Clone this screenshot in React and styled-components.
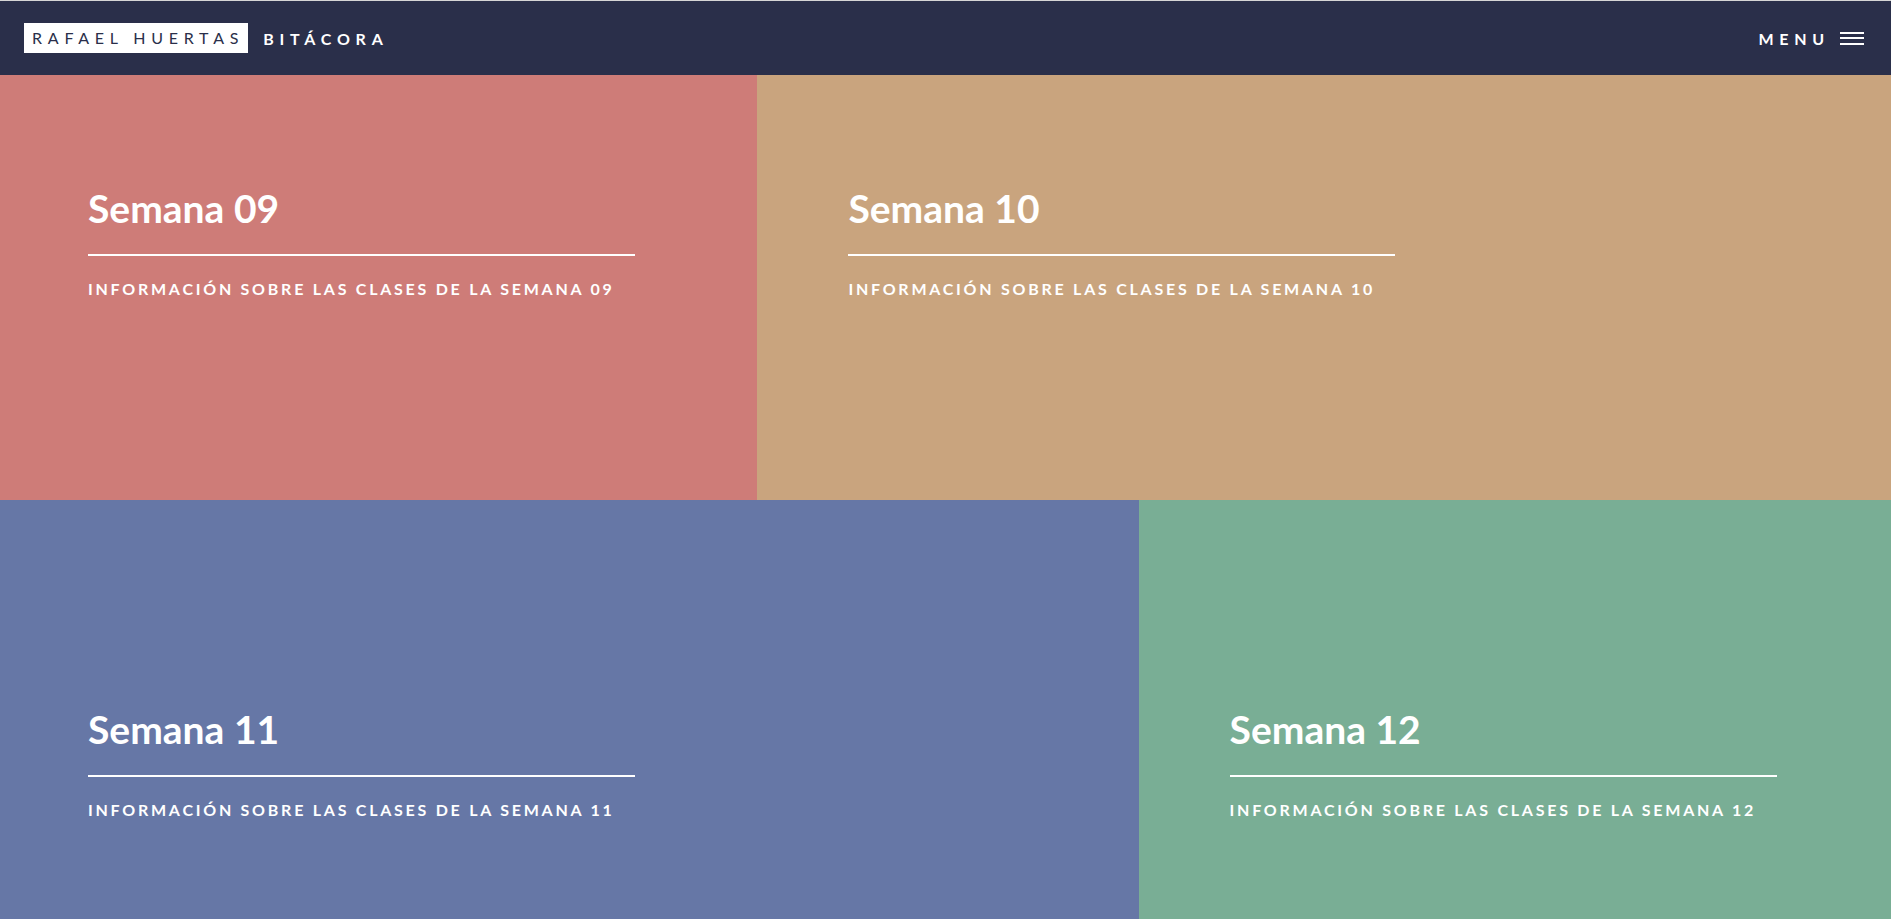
import React from 'react';
import styled, { createGlobalStyle } from 'styled-components';

const weeks = [
  { id: '09', bg: '#ce7c78', width: 'calc(40% + 1px)', row: 1, side: 'left' },
  { id: '10', bg: '#c9a47e', width: 'calc(60% - 1px)', row: 1, side: 'right' },
  { id: '11', bg: '#6677a6', width: 'calc(60% + 4px)', row: 2, side: 'left' },
  { id: '12', bg: '#79ae95', width: 'calc(40% - 4px)', row: 2, side: 'right' },
];

function App() {
  return (
    <>
      <GlobalStyle />
      <S.Header>
        <S.Brand>
          <S.Logo>Rafael Huertas</S.Logo>
          <S.Site>Bitácora</S.Site>
        </S.Brand>
        <S.Menu>
          Menu
          <svg width='24' height='13' viewBox='0 0 24 13'>
            <rect x='0' y='0' width='24' height='2' fill='#fff' />
            <rect x='0' y='5' width='24' height='2' fill='#fff' />
            <rect x='0' y='11' width='24' height='2' fill='#fff' />
          </svg>
        </S.Menu>
      </S.Header>
      <S.Tiles>
        {weeks.map((w) => (
          <S.Tile key={w.id} $bg={w.bg} $width={w.width} $row={w.row} $side={w.side}>
            <S.Title>Semana {w.id}</S.Title>
            <S.Rule />
            <S.Subtitle>Información sobre las clases de la semana {w.id}</S.Subtitle>
          </S.Tile>
        ))}
      </S.Tiles>
    </>
  );
}

export default App;

// -------------------------------------------------- styling ----------------------------------------------
const GlobalStyle = createGlobalStyle`
  * { box-sizing: border-box; }
  body {
    margin: 0;
    background: #2a2f4a;
    font-family: Lato, 'Liberation Sans', sans-serif;
    color: #fff;
  }
`;

const S = {};

S.Header = styled.header`
  height: 75px;
  border-top: 1px solid #d6d6d6;
  background-color: #2a2f4a;
  display: flex;
  align-items: center;
  justify-content: space-between;
  padding: 0 27px 0 24px;
`;

S.Brand = styled.div`
  display: flex;
  align-items: center;
  gap: 15px;
  font-size: 16px;
  letter-spacing: 0.36em;
  text-transform: uppercase;
`;

S.Logo = styled.span`
  background-color: #fff;
  color: #2a2f4a;
  height: 30px;
  line-height: 30px;
  padding: 0 4px 0 8px;
  font-weight: 400;
`;

S.Site = styled.span`
  font-weight: 700;
  color: #fff;
`;

S.Menu = styled.div`
  display: flex;
  align-items: center;
  gap: 10px;
  font-size: 16px;
  font-weight: 700;
  letter-spacing: 0.36em;
  text-transform: uppercase;

  svg {
    display: block;
  }
`;

S.Tiles = styled.main`
  display: flex;
  flex-wrap: wrap;
`;

S.Tile = styled.article`
  width: ${({ $width }) => $width};
  height: ${({ $row }) => ($row === 1 ? '425px' : '419px')};
  background-color: ${({ $bg }) => $bg};
  padding-top: ${({ $row }) => ($row === 1 ? '109px' : '205px')};
  padding-left: ${({ $side }) => ($side === 'left' ? '88px' : '91px')};
  display: flex;
  flex-direction: column;
  align-items: flex-start;
`;

S.Title = styled.h3`
  margin: 0;
  font-size: 39px;
  line-height: 48px;
  font-weight: 700;
  color: #fff;
`;

S.Rule = styled.div`
  width: 547px;
  height: 2px;
  background-color: #fff;
  margin-top: 22px;
`;

S.Subtitle = styled.p`
  margin: 23px 0 0;
  font-size: 16px;
  line-height: 19px;
  font-weight: 700;
  letter-spacing: 2.75px;
  text-transform: uppercase;
  color: #fff;
`;
